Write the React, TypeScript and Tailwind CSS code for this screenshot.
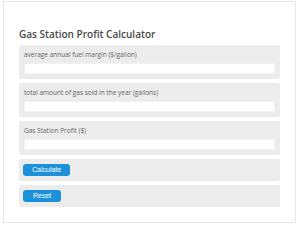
import React from 'react';

const FIELDS = [
  'average annual fuel margin ($/gallon)',
  'total amount of gas sold in the year (gallons)',
  'Gas Station Profit ($)',
];

export default function App() {
  return (
    <div className="w-[299px] h-[231px] bg-white px-[3px] pt-[1px] font-['Open_Sans',sans-serif]">
      <div className="border border-[#e6e6e6] bg-white px-[15px] pt-[25px] pb-[15px]">
        <h1 className="text-[10px] leading-[14px] font-semibold text-[#484848] mb-[4px]">
          Gas Station Profit Calculator
        </h1>

        <div className="flex flex-col gap-[4px]">
          {FIELDS.map(label => (
            <div key={label} className="bg-[#ececec] rounded-[2px] px-[5px] pt-[5px] pb-[5px]">
              <div className="text-[6.5px] leading-[10px] text-[#666] mb-[3px]">{label}</div>
              <div className="h-[11px] bg-white border border-[#f2f2f2]"></div>
            </div>
          ))}

          <div className="bg-[#ececec] rounded-[2px] px-[4px] py-[5px] flex">
            <button className="h-[12px] px-[9px] rounded-[3px] bg-[#1c91d9] text-white text-[7px] leading-[12px] font-['Liberation_Sans',sans-serif]">
              Calculate
            </button>
          </div>

          <div className="bg-[#ececec] rounded-[2px] px-[4px] py-[5px] flex">
            <button className="h-[12px] px-[10px] rounded-[3px] bg-[#1c91d9] text-white text-[7px] leading-[12px] font-['Liberation_Sans',sans-serif]">
              Reset
            </button>
          </div>
        </div>
      </div>
    </div>
  );
}
